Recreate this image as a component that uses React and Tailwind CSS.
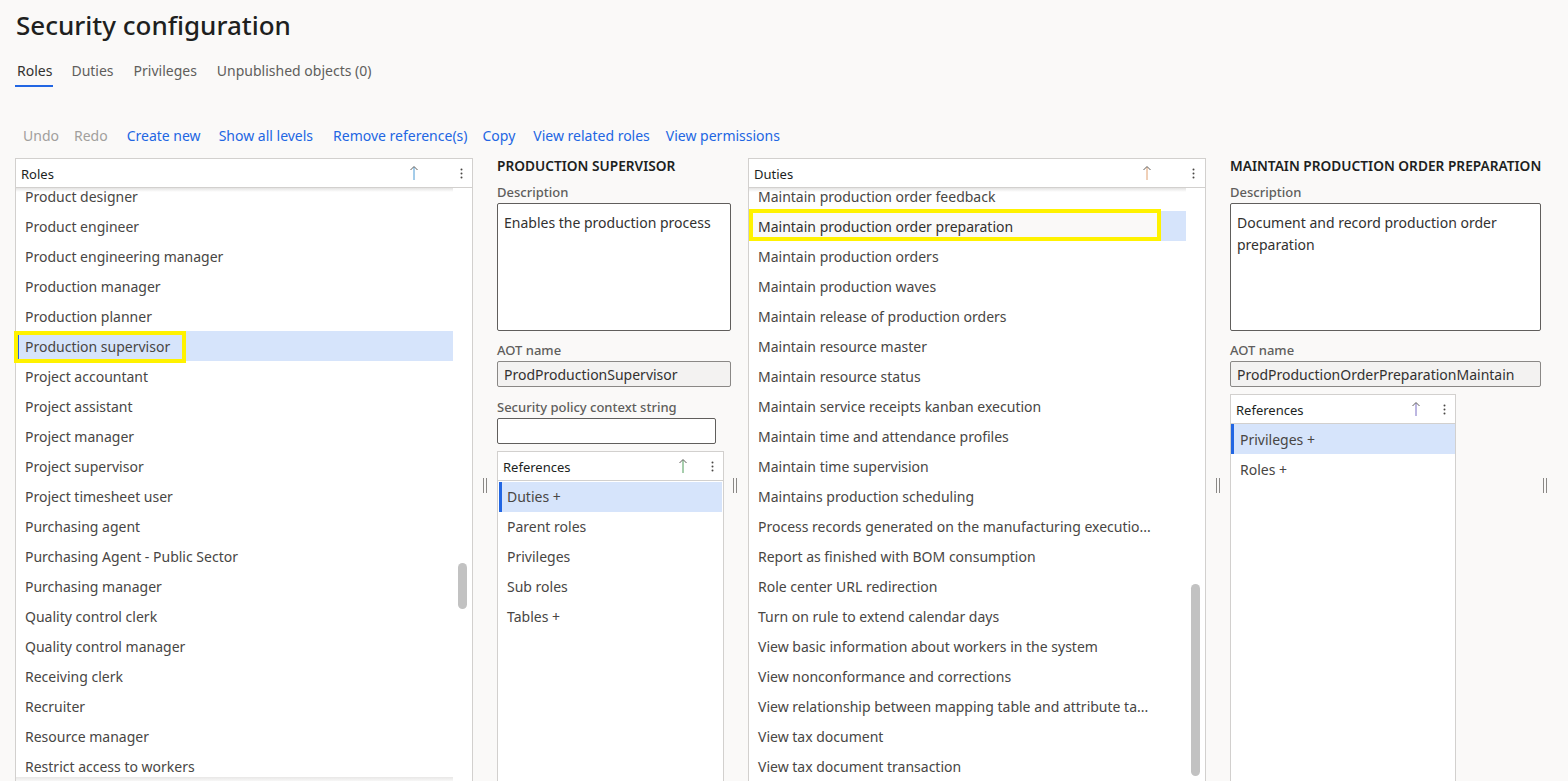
const F = "[font-family:'Noto_Sans',sans-serif]";

const roles = ["Product designer","Product engineer","Product engineering manager","Production manager","Production planner","Production supervisor","Project accountant","Project assistant","Project manager","Project supervisor","Project timesheet user","Purchasing agent","Purchasing Agent - Public Sector","Purchasing manager","Quality control clerk","Quality control manager","Receiving clerk","Recruiter","Resource manager","Restrict access to workers"];
const duties = ["Maintain production order feedback","Maintain production order preparation","Maintain production orders","Maintain production waves","Maintain release of production orders","Maintain resource master","Maintain resource status","Maintain service receipts kanban execution","Maintain time and attendance profiles","Maintain time supervision","Maintains production scheduling","Process records generated on the manufacturing executio...","Report as finished with BOM consumption","Role center URL redirection","Turn on rule to extend calendar days","View basic information about workers in the system","View nonconformance and corrections","View relationship between mapping table and attribute ta...","View tax document","View tax document transaction"];

function SortArrow({ color }) {
  return (
    <svg width="10" height="16" viewBox="0 0 10 16" fill="none" strokeWidth="1">
      <path d="M5 15V2" stroke={color} />
      <path d="M1.5 5L5 1.5L8.5 5" stroke="#605e5c" />
    </svg>
  );
}

function Dots() {
  return (
    <svg width="3" height="11" viewBox="0 0 3 11" fill="#484644">
      <circle cx="1.5" cy="1.5" r="1" />
      <circle cx="1.5" cy="5.5" r="1" />
      <circle cx="1.5" cy="9.5" r="1" />
    </svg>
  );
}

function GridHeader({ title, color, arrowClass, dotsClass }) {
  return (
    <div className="relative z-10 flex h-[29px] shrink-0 items-center border-b border-[#d2d0ce] bg-white pl-[5px]">
      <span className="flex-1 pt-[2px] text-[13px] leading-none text-[#201f1e]">{title}</span>
      <span className={`flex ${arrowClass}`}><SortArrow color={color} /></span>
      <span className={`flex justify-center ${dotsClass}`}><Dots /></span>
    </div>
  );
}

function MainGrid({ title, color, rows, selected, scrollClass, arrowClass, dotsClass, footer }) {
  return (
    <div className="relative flex h-[640px] w-[458px] shrink-0 flex-col overflow-hidden border border-[#d2d0ce] bg-white">
      <GridHeader title={title} color={color} arrowClass={arrowClass} dotsClass={dotsClass} />
      <div className="absolute left-0 top-[29px] z-10 h-[4px] w-[437px] bg-gradient-to-b from-[#e4e3e2] to-transparent" />
      <div className="mt-[-7px] w-[437px]">
        {rows.map((r, i) => (
          <div key={r} className={`flex h-[30px] items-center text-[14px] text-[#484644] ${i === selected ? "border-l-[3px] border-[#2266e3] bg-[#d6e4fb] pl-[6px]" : "pl-[9px]"}`}>
            <span className="whitespace-nowrap">{r}</span>
          </div>
        ))}
      </div>
      {footer && <div className="absolute left-0 top-[618px] z-10 h-[6px] w-[437px] bg-gradient-to-b from-[#e8e7e6] to-white" />}
      <div className={`absolute w-[9px] rounded-full bg-[#c2c2c2] ${scrollClass}`} />
    </div>
  );
}

function RefGrid({ color, rows, className, arrowClass, inset }) {
  return (
    <div className={`flex flex-col overflow-hidden border border-[#d2d0ce] bg-white ${className}`}>
      <GridHeader title="References" color={color} arrowClass={arrowClass} dotsClass="w-[22px]" />
      <div className={inset ? "px-[1px] pt-[1px]" : ""}>
        {rows.map((r, i) => {
          const pad = i === 0 ? (inset ? "pl-[5px]" : "pl-[6px]") : (inset ? "pl-[8px]" : "pl-[9px]");
          return (
            <div key={r} className={`flex h-[30px] items-center text-[14px] text-[#484644] ${pad} ${inset ? "pb-[2px]" : ""} ${i === 0 ? "border-l-[3px] border-[#2266e3] bg-[#d6e4fb]" : ""}`}>
              {r}
            </div>
          );
        })}
      </div>
    </div>
  );
}

function Label({ children }) {
  return <div className="text-[13px] font-medium leading-[18px] text-[#605e5c]">{children}</div>;
}

function Grip() {
  return <div className="h-[15px] w-[4px] border-x border-[#8a8886]" />;
}

function WideSplitter() {
  return (
    <div className="flex w-[24px] shrink-0 justify-center pt-[320px]">
      <Grip />
    </div>
  );
}

function NarrowSplitter({ width }) {
  return (
    <div className={`shrink-0 pl-[2px] pt-[320px] ${width}`}>
      <Grip />
    </div>
  );
}

function Heading({ children }) {
  return <div className="h-[25px] whitespace-nowrap text-[13.7px] font-semibold uppercase leading-[16px] text-[#201f1e]">{children}</div>;
}

function DescBox({ children }) {
  return <div className="mt-[2px] h-[128px] rounded-[2px] border border-[#605e5c] bg-white px-[6px] py-[8px] text-[14px] leading-[22px] text-[#323130]">{children}</div>;
}

function ReadOnly({ children }) {
  return <div className="mt-[2px] flex h-[26px] items-center rounded-[2px] border border-[#8a8886] bg-[#f3f2f1] px-[6px] text-[14px] text-[#323130]">{children}</div>;
}

export default function App() {
  return (
    <div className={`relative h-[781px] w-[1568px] overflow-hidden bg-[#faf9f8] ${F}`}>
      <h1 className="pl-[16px] pt-[7px] text-[26px] font-medium leading-[36px] text-[#201f1e]">Security configuration</h1>

      <div className="mt-[12px] flex h-[31px] pl-[17px] text-[14px] text-[#605e5c]">
        <div className="relative mr-[19px] h-full text-[#323130]">
          <span className="leading-[32px]">Roles</span>
          <div className="absolute bottom-[-1px] left-[-2px] right-[-1px] h-[2px] bg-[#2266e3]" />
        </div>
        <span className="mr-[20px] leading-[32px]">Duties</span>
        <span className="mr-[20px] leading-[32px]">Privileges</span>
        <span className="leading-[32px]">Unpublished objects (0)</span>
      </div>

      <div className="mt-[37px] flex h-[24px] items-center whitespace-nowrap pl-[23px] text-[14px] text-[#2266e3]">
        <span className="mr-[15px] text-[#a19f9d]">Undo</span>
        <span className="mr-[19px] text-[#a19f9d]">Redo</span>
        <span className="mr-[18px]">Create new</span>
        <span className="mr-[20px]">Show all levels</span>
        <span className="mr-[15px]">Remove reference(s)</span>
        <span className="mr-[18px]">Copy</span>
        <span className="mr-[16px]">View related roles</span>
        <span>View permissions</span>
      </div>

      <div className="mt-[11px] flex pl-[15px]">
        <MainGrid title="Roles" color="#4a9ad4" rows={roles} selected={5} scrollClass="left-[442px] top-[404px] h-[46px]" arrowClass="mr-[32px]" dotsClass="w-[21px]" footer />
        <WideSplitter />
        <div className="w-[234px] shrink-0">
          <Heading>Production supervisor</Heading>
          <Label>Description</Label>
          <DescBox>Enables the production process</DescBox>
          <div className="mt-[10px]"><Label>AOT name</Label></div>
          <ReadOnly>ProdProductionSupervisor</ReadOnly>
          <div className="mt-[11px]"><Label>Security policy context string</Label></div>
          <div className="mt-[2px] h-[26px] w-[219px] rounded-[2px] border border-[#605e5c] bg-white" />
          <RefGrid color="#4f9d5a" rows={["Duties +", "Parent roles", "Privileges", "Sub roles", "Tables +"]} className="mt-[7px] h-[340px] w-[227px]" arrowClass="mr-[13px]" inset />
        </div>
        <NarrowSplitter width="w-[17px]" />
        <MainGrid title="Duties" color="#e0a070" rows={duties} selected={1} scrollClass="left-[442px] top-[425px] h-[192px]" arrowClass="mr-[30px]" dotsClass="w-[23px]" />
        <WideSplitter />
        <div className="w-[311px] shrink-0">
          <Heading>Maintain production order preparation</Heading>
          <Label>Description</Label>
          <DescBox>Document and record production order preparation</DescBox>
          <div className="mt-[10px]"><Label>AOT name</Label></div>
          <ReadOnly>ProdProductionOrderPreparationMaintain</ReadOnly>
          <RefGrid color="#7a6fc4" rows={["Privileges +", "Roles +"]} className="mt-[7px] h-[400px] w-[226px]" arrowClass="mr-[12px]" />
        </div>
        <NarrowSplitter width="w-[8px]" />
      </div>

      <div className="absolute left-[14px] top-[331px] h-[32px] w-[172px] border-[4px] border-[#fff200]" />
      <div className="absolute left-[749px] top-[209px] flex h-[32px] w-[412px] items-center border-[4px] border-[#fff200] bg-[#faf9f8] pl-[5px] pt-[2px] text-[14px] text-[#323130]">
        Maintain production order preparation
      </div>
    </div>
  );
}
